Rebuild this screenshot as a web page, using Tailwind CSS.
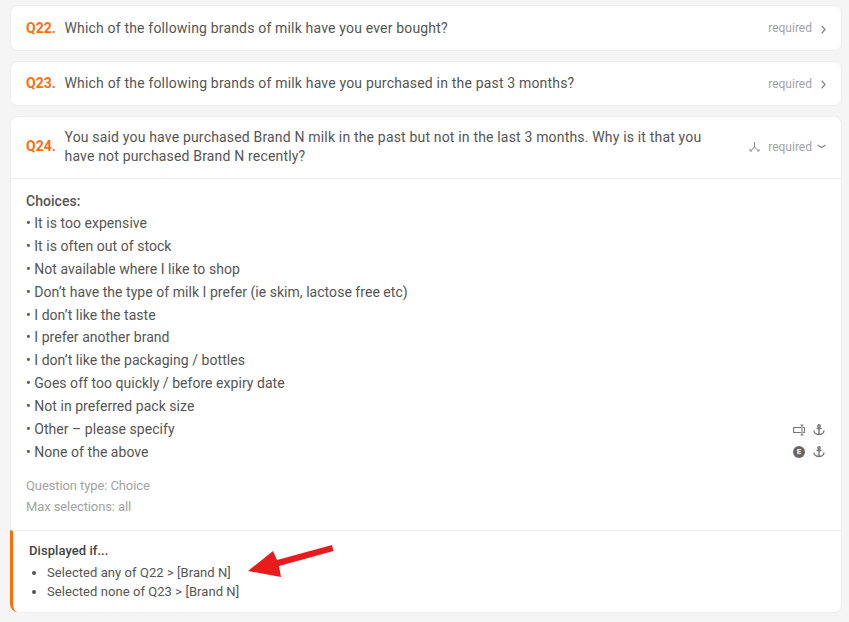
<!DOCTYPE html>
<html lang="en">
<head>
    <meta charset="UTF-8">
    <title>Survey questions</title>
    <script src="https://cdn.jsdelivr.net/npm/@tailwindcss/browser@4"></script>
</head>
<body class="bg-[#f5f5f5] font-['Roboto',sans-serif] text-[#555] h-[622px] overflow-hidden">
    <div class="relative pl-[10px] pr-[7px] pt-[5px] flex flex-col gap-[10px]">

        <!-- Q22 -->
        <div class="h-[46px] bg-white rounded-lg border border-[#eeeeee] flex items-center pl-[15px] pr-[15px]">
            <span class="w-[39px] text-[14px] font-bold text-[#ff6d0a]">Q22.</span>
            <span class="text-[14px] tracking-[0.175px] -ml-[0.5px]">Which of the following brands of milk have you ever bought?</span>
            <span class="ml-auto text-[12px] text-[#a3a3a3]">required</span>
            <svg class="ml-[9px] mt-[2px]" width="5" height="9" viewBox="0 0 5 9" fill="none" stroke="#888" stroke-width="1.3"><path d="M.8.8 4 4.500.8 8.200"/></svg>
        </div>

        <!-- Q23 -->
        <div class="h-[45px] bg-white rounded-lg border border-[#eeeeee] flex items-center pl-[15px] pr-[15px]">
            <span class="w-[39px] text-[14px] font-bold text-[#ff6d0a]">Q23.</span>
            <span class="text-[14px] tracking-[0.18px] -ml-[0.5px]">Which of the following brands of milk have you purchased in the past 3 months?</span>
            <span class="ml-auto text-[12px] text-[#a3a3a3]">required</span>
            <svg class="ml-[9px] mt-[2px]" width="5" height="9" viewBox="0 0 5 9" fill="none" stroke="#888" stroke-width="1.3"><path d="M.8.8 4 4.500.8 8.200"/></svg>
        </div>

        <!-- Q24 -->
        <div class="h-[497px] bg-white rounded-lg border border-[#eeeeee] flex flex-col">
            <div class="h-[62px] flex items-center pl-[15px] pr-[15px] pb-[2px] border-b border-[#eeeeee] shrink-0">
                <span class="w-[39px] text-[14px] font-bold text-[#ff6d0a] shrink-0">Q24.</span>
                <span class="w-[650px] text-[14px] leading-[19px] tracking-[0.175px] -ml-[0.5px]">You said you have purchased Brand N milk in the past but not in the last 3 months. Why is it that you have not purchased Brand N recently?</span>
                <svg class="ml-auto" width="11" height="11" viewBox="0 0 11 11" fill="none" stroke="#888" stroke-width="1"><path d="M5.500 1v5M5.500 6 2 9.500M5.500 6 9 9.500M1 8v2h2M10 8v2H8"/></svg>
                <span class="ml-[8px] text-[12px] text-[#a3a3a3]">required</span>
                <svg class="ml-[5px]" width="9" height="5" viewBox="0 0 9 5" fill="none" stroke="#888" stroke-width="1.3"><path d="M.5 1 4.500 3.500 8.500 1"/></svg>
            </div>

            <div class="flex-1 pl-[15px] pr-[16px] pt-[11px] text-[14px] leading-[22.9px] tracking-[0.04px]">
                <p class="font-medium -mb-[1px]">Choices:</p>
                <p>• It is too expensive</p>
                <p>• It is often out of stock</p>
                <p>• Not available where I like to shop</p>
                <p>• Don’t have the type of milk I prefer (ie skim, lactose free etc)</p>
                <p>• I don’t like the taste</p>
                <p>• I prefer another brand</p>
                <p>• I don’t like the packaging / bottles</p>
                <p>• Goes off too quickly / before expiry date</p>
                <p>• Not in preferred pack size</p>
                <div class="flex items-center justify-between">
                    <p>• Other – please specify</p>
                    <div class="flex items-center gap-[8px]">
                        <svg width="12" height="12" viewBox="0 0 12 12" fill="none" stroke="#777" stroke-width="1.1"><path d="M8 3.500H.6v5H8M9 1.500v9M7.500 1h3M7.500 11h3M10 3.500h1.500v5H10"/></svg>
                        <svg width="12" height="12" viewBox="0 0 12 12" fill="none" stroke="#777" stroke-width="1.4"><circle cx="6" cy="2" r="1.200"/><path d="M6 3v8M3.500 4.500h5M1 6.500c0 2.500 2.500 4 5 4s5-1.500 5-4"/></svg>
                    </div>
                </div>
                <div class="flex items-center justify-between">
                    <p>• None of the above</p>
                    <div class="flex items-center gap-[8px]">
                        <div class="w-[12px] h-[12px] rounded-full bg-[#666] text-white text-[8px] leading-[12px] font-bold text-center">E</div>
                        <svg width="12" height="12" viewBox="0 0 12 12" fill="none" stroke="#777" stroke-width="1.4"><circle cx="6" cy="2" r="1.200"/><path d="M6 3v8M3.500 4.500h5M1 6.500c0 2.500 2.500 4 5 4s5-1.500 5-4"/></svg>
                    </div>
                </div>
                <p class="mt-[11px] text-[13px] leading-[21px] text-[#a3a3a3] tracking-[-0.1px]">Question type: Choice</p>
                <p class="text-[13px] leading-[21px] text-[#a3a3a3] tracking-[-0.1px]">Max selections: all</p>
            </div>

            <div class="h-[82px] shrink-0 -ml-[1px] border-t border-[#eeeeee] border-l-[3px] border-l-[#ff6d0a] rounded-bl-lg pl-[16px] pt-[10px] text-[13px] leading-[19px] tracking-[0.06px]">
                <p class="font-medium text-[#444] mb-[3px]">Displayed if...</p>
                <ul class="list-disc pl-[18px]">
                    <li>Selected any of Q22 &gt; [Brand N]</li>
                    <li>Selected none of Q23 &gt; [Brand N]</li>
                </ul>
            </div>
        </div>

        <div class="h-[20px] bg-white rounded-lg border border-[#eeeeee] -mt-[1px]"></div>

        <!-- annotation arrow laid over the card -->
        <svg class="absolute left-[245px] top-[542px]" width="92" height="38" viewBox="0 0 92 38" fill="#e81c1c"><path d="M3 29 28 9 32 18 87 3 88.500 9 34 24 36 35Z"/></svg>
    </div>
</body>
</html>
